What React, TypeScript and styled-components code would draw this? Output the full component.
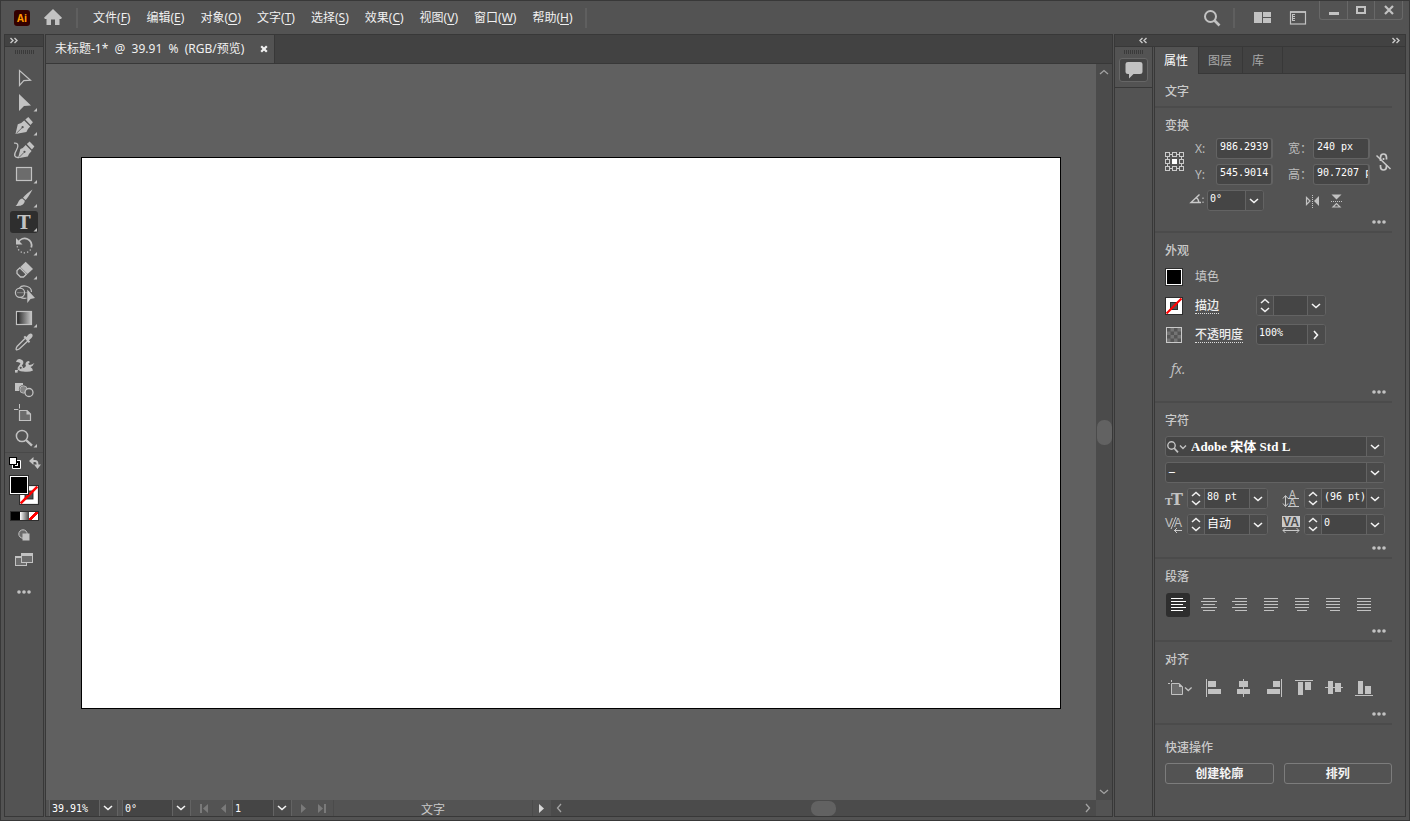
import React from 'react';
import styled, { createGlobalStyle, css } from 'styled-components';

const color = {
  base: '#535353',
  deep: '#424242',
  line: '#383838',
  canvas: '#606060',
  field: '#454545',
  fieldLine: '#636363',
  track: '#4b4b4b',
  icon: '#c2c2c2',
  text: '#cacaca',
  bright: '#f0f0f0',
};

const uiFont = '"Noto Sans", "Noto Sans CJK SC", sans-serif';
const monoFont = '"DejaVu Sans Mono", "Noto Sans CJK SC", monospace';

const GlobalStyle = createGlobalStyle`
  * { box-sizing: border-box; }
  body { margin: 0; background: ${color.base}; }
  body, button, input, select { font: 12px/18px ${uiFont}; color: ${color.text}; }
  button, input, select { margin: 0; padding: 0; border: 0; border-radius: 0; background: none; outline: none; }
  svg { display: block; flex: none; overflow: visible; }
`;

/* ---------- frame ---------- */

const Frame = styled.div`
  display: flex;
  flex-direction: column;
  min-height: 100vh;
  border: 1px solid ${color.line};
  background: ${color.base};
`;

const TitleBar = styled.header`
  display: flex;
  align-items: center;
  height: 33px;
  padding: 0 6px 0 13px;
`;

const Logo = styled.div`
  width: 16px;
  height: 16px;
  margin-right: 14px;
  border-radius: 3px;
  background: #330000;
  color: #ff9a00;
  font: bold 10px/16px "Open Sans", sans-serif;
  text-align: center;
`;

const IconButton = styled.button<{ $w?: number; $h?: number; $active?: boolean }>`
  display: flex;
  align-items: center;
  justify-content: center;
  flex: none;
  width: ${(p) => p.$w ?? 24}px;
  height: ${(p) => p.$h ?? 24}px;
  border-radius: 3px;
  color: ${(p) => (p.$active ? '#fff' : color.icon)};
  background: ${(p) => (p.$active ? '#2e2e2e' : 'none')};
`;

const BarDivider = styled.span`
  width: 2px;
  height: 20px;
  background: #5f5f5f;
`;

const MenuBar = styled.nav`
  display: flex;
  gap: 16px;
  padding: 0 12px 0 15px;
`;

const MenuItem = styled.button`
  color: ${color.bright};
  white-space: nowrap;
  u { text-underline-offset: 2px; }
`;

const TitleTools = styled.div`
  display: flex;
  align-items: center;
  gap: 12px;
  margin-left: auto;
  padding-right: 13px;
`;

const WindowControls = styled.div`
  display: flex;
  align-self: flex-start;
  height: 19px;
  border: 1px solid #686868;
  border-top: 0;
  border-radius: 0 0 3px 3px;
  button + button { border-left: 1px solid #686868; border-radius: 0; }
`;

const Workspace = styled.div`
  display: flex;
  flex: 1;
  gap: 1px;
  margin: 0 3px 3px;
`;

const Column = styled.section`
  display: flex;
  flex-direction: column;
  border: 1px solid ${color.line};
`;

const CollapseBar = styled.div`
  display: flex;
  align-items: center;
  flex: none;
  height: 12px;
  padding: 0 5px;
  border-bottom: 1px solid ${color.line};
  background: ${color.deep};
  color: ${color.text};
`;

const Grip = styled.div`
  width: 19px;
  height: 4px;
  margin: 3px auto 0;
  background: repeating-linear-gradient(90deg, #3a3a3a 0 1px, transparent 1px 2px);
`;

/* ---------- tools ---------- */

const ToolColumn = styled(Column)`
  flex: none;
  width: 40px;
`;

const ToolList = styled.div`
  display: flex;
  flex-direction: column;
  align-items: center;
  gap: 2px;
  margin-top: 13px;
  padding-bottom: 3px;
  border-bottom: 1px solid #494949;
`;

const SwatchTools = styled.div`
  display: flex;
  flex-direction: column;
  align-items: center;
`;

const SpreadRow = styled.div`
  display: flex;
  justify-content: space-between;
  width: 32px;
  margin: 4px 0 6px 2px;
`;

const ColorPair = styled.div`
  display: grid;
  width: 30px;
  height: 30px;
  margin-bottom: 6px;
`;

const PairButton = styled.button<{ $back?: boolean }>`
  grid-area: 1 / 1;
  place-self: ${(p) => (p.$back ? 'end' : 'start')};
  width: 20px;
  height: 20px;
`;

const ModeRow = styled.div`
  display: flex;
  height: 10px;
  margin-bottom: 3px;
  border: 1px solid #2d2d2d;
`;

const ModeButton = styled.button<{ $bg: string }>`
  width: 9px;
  height: 8px;
  background: ${(p) => p.$bg};
`;

/* ---------- document ---------- */

const DocumentColumn = styled(Column)`
  flex: 1;
  min-width: 0;
`;

const TabStrip = styled.div`
  display: flex;
  height: 29px;
  border-bottom: 1px solid ${color.line};
  background: ${color.deep};
`;

const DocumentTab = styled.div`
  display: flex;
  align-items: center;
  gap: 11px;
  padding: 0 1px 0 9px;
  border-right: 1px solid ${color.line};
  background: ${color.base};
  color: ${color.bright};
  white-space: pre;
`;

const CanvasRow = styled.div`
  display: flex;
  flex: 1;
`;

const Canvas = styled.main`
  display: flex;
  flex: 1;
  align-items: center;
  min-width: 0;
  padding: 2px 35px 0;
  background: ${color.canvas};
`;

const Artboard = styled.div`
  box-sizing: content-box;
  flex: 1;
  aspect-ratio: 16 / 9;
  border: 1px solid #000;
  background: #fff;
`;

const Scrollbar = styled.div<{ $vertical?: boolean }>`
  display: flex;
  align-items: center;
  justify-content: space-between;
  background: ${color.track};
  color: #a3a3a3;
  button { color: inherit; }
  ${(p) =>
    p.$vertical
      ? css`flex-direction: column; width: 16px;`
      : css`flex: 1; height: 16px;`}
`;

const Thumb = styled.div<{ $vertical?: boolean }>`
  width: ${(p) => (p.$vertical ? 15 : 25)}px;
  height: ${(p) => (p.$vertical ? 25 : 15)}px;
  border-radius: 7px;
  background: #626262;
`;

const StatusBar = styled.footer`
  display: flex;
  height: 16px;
`;

const StatusControls = styled.div`
  display: flex;
  align-items: center;
  width: 287px;
  padding-left: 3px;
`;

const StatusText = styled.div`
  display: flex;
  align-items: center;
  justify-content: center;
  width: 200px;
  height: 16px;
  padding-top: 4px;
  border: solid ${color.track};
  border-width: 0 1px;
`;

const Corner = styled.div`
  width: 16px;
`;

/* ---------- right dock ---------- */

const Dock = styled(Column)`
  flex: none;
`;

const DockBody = styled.div`
  display: flex;
  flex: 1;
  gap: 1px;
`;

const CommentColumn = styled.div`
  width: 38px;
  border-right: 1px solid ${color.line};
`;

const CommentGroup = styled.div`
  display: flex;
  flex-direction: column;
  align-items: center;
  gap: 4px;
  height: 41px;
  border-bottom: 1px solid ${color.line};
`;

const CommentButton = styled(IconButton)`
  border: 1px solid #666;
  background: ${color.field};
`;

const Properties = styled.div`
  width: 251px;
  border-left: 1px solid ${color.line};
`;

const PanelTabs = styled.div`
  display: flex;
  height: 27px;
  background: ${color.deep};
  box-shadow: inset 0 -1px ${color.line};
`;

const PanelTab = styled.button<{ $active?: boolean }>`
  padding: 0 10px 0 9px;
  border-right: 1px solid ${color.line};
  color: ${(p) => (p.$active ? '#fff' : '#a8a8a8')};
  background: ${(p) => (p.$active ? color.base : 'none')};
  &:last-child { padding-right: 18px; }
`;

const Section = styled.section<{ $last?: boolean }>`
  display: flex;
  flex-direction: column;
  margin-right: 13px;
  padding: ${(p) => (p.$last ? '14px 0 0 10px' : '9px 0 2px 10px')};
  border-bottom: ${(p) => (p.$last ? '0' : '2px solid #4b4b4b')};
`;

const Heading = styled.h2<{ $gap: number }>`
  margin: 0 0 ${(p) => p.$gap}px;
  font: 500 12px/18px ${uiFont};
`;

const More = styled(IconButton)<{ $top: number }>`
  align-self: flex-end;
  margin: ${(p) => p.$top}px 6px 0 0;
`;

const TransformGrid = styled.div`
  display: grid;
  grid-template-columns: 30px 21px 57px 40px 57px 22px;
  row-gap: 5px;
  align-items: center;
`;

const SpanTwo = styled.div<{ $end?: boolean }>`
  grid-row: 1 / 3;
  grid-column: ${(p) => (p.$end ? 6 : 1)};
  justify-self: ${(p) => (p.$end ? 'end' : 'start')};
`;

const FieldLabel = styled.label<{ $col: number; $indent?: number }>`
  grid-column: ${(p) => p.$col};
  padding-left: ${(p) => p.$indent ?? 0}px;
  color: #bcbcbc;
`;

const TextField = styled.input`
  width: 100%;
  min-width: 0;
  height: 21px;
  padding: 0 0 4px 3px;
  border: 1px solid ${color.fieldLine};
  border-right-width: 2px;
  border-radius: 3px;
  background: ${color.field};
  color: #fff;
  font: 10px/15px ${monoFont};
`;

const AngleRow = styled.div`
  display: flex;
  align-items: center;
  grid-column: 1 / -1;
  gap: 3px;
  padding-left: 25px;
`;

const FlipGroup = styled.div`
  display: flex;
  gap: 8px;
  margin-left: 37px;
`;

const ComboBox = styled.div<{ $w: number; $flat?: boolean }>`
  display: flex;
  flex: none;
  width: ${(p) => p.$w}px;
  height: ${(p) => (p.$flat ? 16 : 21)}px;
  border: 1px solid ${color.fieldLine};
  border-width: ${(p) => (p.$flat ? '0 1px' : '1px')};
  border-radius: ${(p) => (p.$flat ? 0 : 3)}px;
  background: ${color.field};
  overflow: hidden;
`;

const Stepper = styled.div`
  display: flex;
  flex-direction: column;
  width: 17px;
  border-right: 1px solid ${color.fieldLine};
  background: #4d4d4d;
  button { color: #f0f0f0; }
`;

const SelectArea = styled.div`
  display: grid;
  flex: 1;
  min-width: 0;
`;

const Select = styled.select<{ $face?: 'serif' | 'cjk'; $flat?: boolean }>`
  grid-area: 1 / 1;
  appearance: none;
  min-width: 0;
  width: 100%;
  padding: ${(p) => (p.$flat ? '2px 18px 0 2px' : p.$face === 'serif' ? '0 18px 0 2px' : '0 18px 3px 2px')};
  color: #fff;
  font: ${(p) =>
    p.$face === 'serif'
      ? 'bold 13px/18px "Liberation Serif", "Noto Sans CJK SC", serif'
      : p.$face === 'cjk'
        ? `12px/15px ${uiFont}`
        : `10px/14px ${monoFont}`};
`;

const DropMark = styled.span`
  display: flex;
  align-items: center;
  justify-content: center;
  grid-area: 1 / 1;
  justify-self: end;
  width: 18px;
  padding-right: 1px;
  border-left: 1px solid ${color.fieldLine};
  background: #4b4b4b;
  color: #f4f4f4;
  pointer-events: none;
`;

const FontSearch = styled.span`
  display: flex;
  align-items: center;
  gap: 1px;
  padding: 0 2px 0 1px;
  color: ${color.icon};
`;

const Rows = styled.div<{ $gap: number }>`
  display: flex;
  flex-direction: column;
  gap: ${(p) => p.$gap}px;
`;

const AppearanceRow = styled.div`
  display: grid;
  grid-template-columns: 30px 61px 1fr;
  align-items: center;
  height: 21px;
`;

const DottedLabel = styled.button`
  justify-self: start;
  height: 16px;
  border-bottom: 1px dotted #ddd;
  color: #ececec;
  font-weight: 500;
  line-height: 15px;
`;

const FxButton = styled(IconButton)`
  justify-content: flex-start;
  margin-top: 13px;
  padding-left: 6px;
  font: italic 14px/18px "Open Sans", sans-serif;
`;

const CharPair = styled.div`
  display: flex;
  align-items: center;
  gap: 4px;
`;

const CharLine = styled.div`
  display: flex;
  gap: 14px;
`;

const ButtonRow = styled.div<{ $gap: number; $indent?: number }>`
  display: flex;
  gap: ${(p) => p.$gap}px;
  padding-left: ${(p) => p.$indent ?? 0}px;
`;

const ActionButton = styled.button`
  flex: 1;
  height: 21px;
  border: 1px solid #7c7c7c;
  border-radius: 3px;
  color: #f4f4f4;
  font-weight: 600;
  line-height: 19px;
`;

/* ---------- icons ---------- */

const Svg = ({ w, h, children }: { w: number; h: number; children: React.ReactNode }) => (
  <svg width={w} height={h} viewBox={`0 0 ${w} ${h}`} fill="none" stroke="currentColor" aria-hidden="true">
    {children}
  </svg>
);

const chevrons = {
  down: 'M1 3L5 6.5L9 3',
  up: 'M1 7L5 3.5L9 7',
  right: 'M3 1L6.5 5L3 9',
  left: 'M7 1L3.5 5L7 9',
};

const Chevron = ({ dir = 'down', strong = true }: { dir?: keyof typeof chevrons; strong?: boolean }) => (
  <Svg w={10} h={10}>
    <path d={chevrons[dir]} strokeWidth={strong ? 1.6 : 1.3} />
  </Svg>
);

const DoubleArrow = ({ left }: { left?: boolean }) => (
  <Svg w={8} h={7}>
    <path d={left ? 'M3.5 1L1 3.5L3.5 6M7.5 1L5 3.5L7.5 6' : 'M0.5 1L3 3.5L0.5 6M4.5 1L7 3.5L4.5 6'} strokeWidth={1.4} />
  </Svg>
);

const Dots = () => (
  <svg width="14" height="4" viewBox="0 0 14 4" fill="currentColor" aria-hidden="true">
    <circle cx="2" cy="2" r="1.8" /><circle cx="7" cy="2" r="1.8" /><circle cx="12" cy="2" r="1.8" />
  </svg>
);

const Magnifier = () => (
  <Svg w={18} h={18}>
    <circle cx="7.5" cy="7.5" r="5.5" strokeWidth="2" />
    <path d="M11.5 11.5L16.5 16.5" strokeWidth="2.6" />
  </Svg>
);

const NoneSwatch = ({ size = 18 }: { size?: number }) => (
  <svg width={size} height={size} viewBox="0 0 18 18" aria-hidden="true">
    <rect width="18" height="18" fill="#2d2d2d" />
    <rect x="1" y="1" width="16" height="16" fill="#fff" />
    <rect x="5.5" y="5.5" width="7" height="7" fill="#535353" stroke="#2d2d2d" />
    <path d="M1.5 16.5L16.5 1.5" stroke="#f00" strokeWidth="2.2" />
  </svg>
);

const SolidSwatch = ({ size = 18 }: { size?: number }) => (
  <svg width={size} height={size} viewBox={`0 0 ${size} ${size}`} aria-hidden="true">
    <rect width={size} height={size} fill="#2d2d2d" />
    <rect x="1" y="1" width={size - 2} height={size - 2} fill="#fff" />
    <rect x="2" y="2" width={size - 4} height={size - 4} fill="#000" />
  </svg>
);

const solid = { fill: 'currentColor', stroke: 'none' };

const tools: { name: string; more?: boolean; active?: boolean; art: React.ReactNode }[] = [
  { name: '选择工具', art: <path d="M9.5 3.5V18.5L13.8 13.6L20.5 13.2Z" strokeWidth="1.2" /> },
  { name: '直接选择工具', more: true, art: <path {...solid} d="M9 3V20L14 15L21 14.5Z" /> },
  {
    name: '钢笔工具', more: true,
    art: <><path {...solid} d="M5.5 19L7.8 9.2Q11.5 8.4 14.2 5.4L20.2 11.4Q17.4 13.8 16.4 17Z" /><path {...solid} d="M15.3 4.4L18.3 2L22.9 7.2L20.5 10Z" /><path d="M6.5 18.2L12 12.8" stroke="#535353" strokeWidth=".8" /><circle cx="12.6" cy="12.2" r="1.1" fill="#535353" stroke="none" /></>,
  },
  {
    name: '曲率工具',
    art: <><path {...solid} d="M8 19.3L10.4 10Q13.5 9 15.7 6L21.6 12Q19 14.4 17.8 17.6Z" /><path {...solid} d="M16.8 5L19.6 2.6L24.4 7.6L21.9 10.6Z" /><path d="M9 18.5L14 13.4" stroke="#535353" strokeWidth=".8" /><circle cx="14.5" cy="12.8" r="1.1" fill="#535353" stroke="none" /><path d="M4 4.2C8.5 3.5 8.8 7 6.5 11C3.5 16 4 19 9 18.4" strokeWidth="1.3" /></>,
  },
  { name: '矩形工具', more: true, art: <rect x="6.5" y="4.5" width="15" height="13" fill="#6c6c6c" strokeWidth="1.2" /> },
  { name: '画笔工具', more: true, art: <><path {...solid} d="M22.5 2.5Q18 11 15.5 13L13 10.7Q16 7 22.5 2.5Z" /><path {...solid} d="M12.3 11.4L14.8 13.8C14.5 18 10 19.6 5.5 18.8C8.5 17.5 7.5 12.5 12.3 11.4Z" /></> },
  { name: '文字工具', more: true, active: true, art: <text x="14" y="18" textAnchor="middle" fontFamily="DejaVu Serif, serif" fontSize="18" fontWeight="bold" fill="currentColor" stroke="none">T</text> },
  { name: '旋转工具', more: true, art: <><path d="M8.5 7A7 7 0 0 1 21.3 12.5" strokeWidth="1.8" /><path {...solid} d="M6 3V9.5H12.5Z" /><path d="M20.6 14.5A7.2 7.2 0 0 1 7.3 11" strokeWidth="1.3" strokeDasharray="1.3 2" /></> },
  { name: '橡皮擦工具', more: true, art: <><path {...solid} d="M15.7 2.7L23 10L17.5 15L10.3 8Z" /><path d="M9.8 8.8L16.4 15.3L13.5 18H10.5L7 14.5V11.5Z" strokeWidth="1.3" /></> },
  { name: '形状生成器工具', art: <><circle cx="10" cy="9.7" r="4.6" strokeWidth="1.2" /><path d="M9.5 5C12 1.5 21.5 2.5 21.5 9M10.5 14.4Q14 16 16.5 15" strokeWidth="1.2" /><path d="M7.5 9.7H18" strokeDasharray="1 1" /><path {...solid} d="M17.3 6.5V20L20.5 16L25 15Z" /></> },
  { name: '渐变工具', more: true, art: <><defs><linearGradient id="toolGradient"><stop stopColor="#222" /><stop offset="1" stopColor="#c8c8c8" /></linearGradient></defs><rect x="6.5" y="4.5" width="15" height="13" fill="url(#toolGradient)" strokeWidth="1.2" /></> },
  { name: '吸管工具', art: <><path d="M15 7.5L7 15.5Q5.5 18.3 6.5 18.8Q7.8 19 9.5 17.8L17.8 10" strokeWidth="1.3" /><path {...solid} d="M13.5 6L15 4.7L16.4 6L18.5 3.5Q21 1.5 22.3 3.3Q23.5 5 21.5 7L19 9.2L20.2 10.7L18.8 12Z" /></> },
  { name: '操控变形工具', art: <><path {...solid} d="M6 7Q7 3.5 10.5 4.2Q15.5 6 12 10.5L10.5 13Q14 14 16 11Q14.5 8.5 17 6.5Q20 5 19.6 7.8Q17 8.6 19.5 10Q21.5 10 24.4 8Q22.5 11.8 20.5 12Q22.5 13 23 15.5Q19 17.5 13 16.4Q8 16.5 7.5 13L10.5 8.5Q9.5 6.5 6 7Z" /><path d="M5.5 17L10.5 12.5L15 10" stroke="#535353" strokeWidth=".8" /><circle cx="10.7" cy="12.8" r="1.7" fill="#535353" strokeWidth="1.2" /><rect x="5" y="15" width="2.6" height="2.6" {...solid} /><path d="M6.5 16L9.3 14" /></> },
  { name: '混合工具', art: <><rect {...solid} x="5" y="4" width="8" height="8" /><circle cx="13.5" cy="10.5" r="4.6" fill="#535353" stroke="none" /><circle cx="13.5" cy="10.5" r="3.7" fill="#858585" strokeWidth=".8" /><circle cx="19" cy="13.5" r="4" fill="#535353" strokeWidth="1.3" /></> },
  { name: '画板工具', art: <><path d="M4 6.5H8.3M9.5 1V5.5" /><path d="M9.5 7.5H17L20.5 11V17.5H9.5Z" fill="#6c6c6c" strokeWidth="1.2" /><path {...solid} d="M16.5 7V11.5H21Z" /></> },
  { name: '缩放工具', more: true, art: <><circle cx="12" cy="9" r="5.6" strokeWidth="1.5" /><path d="M16 13L22 18.7" strokeWidth="2.4" /></> },
];

const Bars = ({ rows }: { rows: [number, number][] }) => (
  <Svg w={24} h={24}>
    {rows.map(([x, w], i) => <rect key={i} x={x} y={5 + i * 3} width={w} height="1" {...solid} />)}
  </Svg>
);

const paragraphModes: { name: string; rows: [number, number][] }[] = [
  { name: '左对齐', rows: [[5, 12], [5, 15], [5, 12], [5, 15], [5, 12]] },
  { name: '居中对齐', rows: [[6, 12], [4, 16], [6, 12], [4, 16], [6, 12]] },
  { name: '右对齐', rows: [[7, 12], [4, 15], [7, 12], [4, 15], [7, 12]] },
  { name: '两端对齐，末行左对齐', rows: [[5, 14], [5, 14], [5, 14], [5, 14], [5, 10]] },
  { name: '两端对齐，末行居中对齐', rows: [[5, 14], [5, 14], [5, 14], [5, 14], [7, 10]] },
  { name: '两端对齐，末行右对齐', rows: [[5, 14], [5, 14], [5, 14], [5, 14], [9, 10]] },
  { name: '全部两端对齐', rows: [[5, 14], [5, 14], [5, 14], [5, 14], [5, 14]] },
];

const alignModes: { name: string; boxes: [number, number, number, number][] }[] = [
  { name: '水平左对齐', boxes: [[4, 3, 1, 18], [6, 5, 8, 6], [6, 13, 13, 5]] },
  { name: '水平居中对齐', boxes: [[11, 3, 1, 18], [7, 5, 9, 6], [5, 13, 13, 5]] },
  { name: '水平右对齐', boxes: [[19, 3, 1, 18], [11, 5, 7, 6], [5, 13, 13, 5]] },
  { name: '垂直顶对齐', boxes: [[3, 4, 18, 1], [6, 6, 5, 13], [13, 6, 6, 8]] },
  { name: '垂直居中对齐', boxes: [[3, 11, 18, 1], [6, 5, 5, 13], [13, 7, 6, 9]] },
  { name: '垂直底对齐', boxes: [[3, 19, 18, 1], [6, 5, 5, 13], [13, 10, 6, 8]] },
];

/* ---------- controls ---------- */

type ComboProps = {
  label: string;
  value: string;
  width: number;
  stepper?: boolean;
  flat?: boolean;
  face?: 'serif' | 'cjk';
  mark?: 'down' | 'right';
  lead?: React.ReactNode;
};

const Combo = ({ label, value, width, stepper, flat, face, mark = 'down', lead }: ComboProps) => (
  <ComboBox $w={width} $flat={flat}>
    {stepper && (
      <Stepper>
        <IconButton $w={15} $h={9} aria-label={`${label} 增加`}><Chevron dir="up" /></IconButton>
        <IconButton $w={15} $h={10} aria-label={`${label} 减少`}><Chevron /></IconButton>
      </Stepper>
    )}
    {lead}
    <SelectArea>
      <Select aria-label={label} $face={face} $flat={flat} defaultValue={value}>
        <option>{value}</option>
      </Select>
      <DropMark><Chevron dir={mark} /></DropMark>
    </SelectArea>
  </ComboBox>
);

const Play = ({ left, bar, bright }: { left?: boolean; bar?: boolean; bright?: boolean }) => (
  <svg width="9" height="9" viewBox="0 0 9 9" fill={bright ? '#d8d8d8' : '#7a7a7a'} aria-hidden="true">
    <path d={left ? 'M8 0V9L3 4.5Z' : 'M1 0V9L6 4.5Z'} />
    {bar && <rect x={left ? 0 : 7} width="2" height="9" />}
  </svg>
);

const menus = [
  ['文件', 'F'], ['编辑', 'E'], ['对象', 'O'], ['文字', 'T'], ['选择', 'S'],
  ['效果', 'C'], ['视图', 'V'], ['窗口', 'W'], ['帮助', 'H'],
];

const ToolPanel = () => (
  <ToolColumn aria-label="工具">
    <CollapseBar><DoubleArrow /></CollapseBar>
    <Grip />
    <ToolList>
      {tools.map((tool) => (
        <IconButton key={tool.name} $w={28} $h={22} $active={tool.active} aria-label={tool.name}>
          <svg width="28" height="22" viewBox="0 0 28 22" fill="none" stroke={color.icon} color={color.icon} aria-hidden="true">
            {tool.art}
            {tool.more && <path d="M27 17V20.5H23.5Z" {...solid} />}
          </svg>
        </IconButton>
      ))}
    </ToolList>
    <SwatchTools>
      <SpreadRow>
        <IconButton $w={12} $h={12} aria-label="默认填色和描边">
          <Svg w={12} h={12}>
            <path d="M3.5 3.5H11.5V11.5H3.5Z" fill="#000" stroke="#fff" strokeWidth="1" />
            <rect x="6" y="6" width="3" height="3" fill="#fff" stroke="none" />
            <rect x=".5" y=".5" width="7" height="7" stroke="#000" fill="#fff" />
          </Svg>
        </IconButton>
        <IconButton $w={12} $h={12} aria-label="互换填色和描边">
          <Svg w={12} h={12}>
            <path d="M3 4H6Q8.5 4 8.5 7V9" strokeWidth="1.8" />
            <path {...solid} d="M0 4L4.5 0V8ZM5 7.5H12L8.5 12Z" />
          </Svg>
        </IconButton>
      </SpreadRow>
      <ColorPair>
        <PairButton $back aria-label="描边"><NoneSwatch size={20} /></PairButton>
        <PairButton aria-label="填色"><SolidSwatch size={20} /></PairButton>
      </ColorPair>
      <ModeRow>
        <ModeButton $bg="#000" aria-label="颜色" />
        <ModeButton $bg="linear-gradient(90deg, #fff, #444)" aria-label="渐变" />
        <ModeButton $bg="linear-gradient(135deg, #fff 38%, #f00 38% 62%, #fff 62%)" aria-label="无" />
      </ModeRow>
      <IconButton $w={28} $h={22} aria-label="绘图模式">
        <Svg w={12} h={12}>
          <circle cx="5" cy="5" r="4.2" fill="#6c6c6c" />
          <rect x="4.5" y="4.5" width="7" height="7" {...solid} />
        </Svg>
      </IconButton>
      <IconButton $w={28} $h={28} aria-label="更改屏幕模式">
        <Svg w={18} h={14}>
          <rect x=".5" y="3.5" width="11" height="9" fill="#6c6c6c" />
          <rect x=".5" y="3" width="11" height="2" {...solid} />
          <rect x="6.5" y=".5" width="11" height="9" fill="#6c6c6c" />
          <rect x="6.5" y="0" width="11" height="3" {...solid} />
        </Svg>
      </IconButton>
      <IconButton $w={28} $h={36} aria-label="编辑工具栏"><Dots /></IconButton>
    </SwatchTools>
  </ToolColumn>
);

const DocumentArea = () => (
  <DocumentColumn>
    <TabStrip>
      <DocumentTab>
        {'未标题-1*  @  39.91  %  (RGB/预览)'}
        <IconButton $w={18} $h={18} aria-label="关闭">
          <Svg w={8} h={8}><path d="M1.2 1.2L6.8 6.8M6.8 1.2L1.2 6.8" strokeWidth="2.2" stroke="#f0f0f0" /></Svg>
        </IconButton>
      </DocumentTab>
    </TabStrip>
    <CanvasRow>
      <Canvas><Artboard /></Canvas>
      <Scrollbar $vertical>
        <IconButton $w={16} $h={16} aria-label="向上滚动"><Chevron dir="up" strong={false} /></IconButton>
        <Thumb $vertical />
        <IconButton $w={16} $h={16} aria-label="向下滚动"><Chevron strong={false} /></IconButton>
      </Scrollbar>
    </CanvasRow>
    <StatusBar>
      <StatusControls>
        <Combo label="缩放" value="39.91%" width={69} flat />
        <ButtonRow $gap={0} $indent={4}><Combo label="旋转视图" value="0°" width={69} flat /></ButtonRow>
        <ButtonRow $gap={0} $indent={4}>
          <IconButton $w={18} $h={16} aria-label="首项"><Play left bar /></IconButton>
          <IconButton $w={18} $h={16} aria-label="上一项"><Play left /></IconButton>
        </ButtonRow>
        <ButtonRow $gap={0} $indent={1}><Combo label="画板" value="1" width={60} flat /></ButtonRow>
        <ButtonRow $gap={0} $indent={4}>
          <IconButton $w={17} $h={16} aria-label="下一项"><Play /></IconButton>
          <IconButton $w={17} $h={16} aria-label="末项"><Play bar /></IconButton>
        </ButtonRow>
      </StatusControls>
      <StatusText>文字</StatusText>
      <IconButton $w={18} $h={16} aria-label="状态栏选项"><Play bright /></IconButton>
      <Scrollbar>
        <IconButton $w={16} $h={16} aria-label="向左滚动"><Chevron dir="left" strong={false} /></IconButton>
        <Thumb />
        <IconButton $w={16} $h={16} aria-label="向右滚动"><Chevron dir="right" strong={false} /></IconButton>
      </Scrollbar>
      <Corner />
    </StatusBar>
  </DocumentColumn>
);

const TransformSection = () => (
  <Section>
    <Heading $gap={3}>变换</Heading>
    <TransformGrid>
      <SpanTwo>
        <Svg w={19} h={19}>
          {[0, 7, 14].map((y) => [0, 7, 14].map((x) => (
            x === 7 && y === 7
              ? <rect key="mid" x="7" y="7" width="5" height="5" fill="#fff" stroke="none" />
              : <rect key={`${x}-${y}`} x={x + 0.5} y={y + 0.5} width="4" height="4" />
          )))}
          <path d="M5 2.5H7M12 2.5H14M5 16.5H7M12 16.5H14M2.5 5V7M2.5 12V14M16.5 5V7M16.5 12V14" />
        </Svg>
      </SpanTwo>
      <FieldLabel $col={2} htmlFor="pos-x">X:</FieldLabel>
      <TextField id="pos-x" defaultValue="986.2939" />
      <FieldLabel $col={4} $indent={15} htmlFor="size-w">宽：</FieldLabel>
      <TextField id="size-w" defaultValue="240 px" />
      <SpanTwo $end>
        <Svg w={16} h={18}>
          <path d="M4.5 8V4.5Q4.5 1 7.5 1Q10.5 1 10.5 4.5V6.5M4.5 12V13.5Q4.5 17 7.5 17Q10.5 17 10.5 13.5V12M7.5 5V7" strokeWidth="1.7" />
          <path d="M.5 2.5L14.5 16" strokeWidth="1.5" />
        </Svg>
      </SpanTwo>
      <FieldLabel $col={2} htmlFor="pos-y">Y:</FieldLabel>
      <TextField id="pos-y" defaultValue="545.9014" />
      <FieldLabel $col={4} $indent={15} htmlFor="size-h">高：</FieldLabel>
      <TextField id="size-h" defaultValue="90.7207 px" />
      <AngleRow>
        <Svg w={14} h={16}>
          <path d="M9.5 1.5L1 9.5H11M6 4.5Q8.7 6 8.8 9.5" strokeWidth="1.4" />
          <path d="M13 4.5V6M13 8.5V10" />
        </Svg>
        <Combo label="旋转" value="0°" width={57} />
        <FlipGroup>
          <IconButton $w={16} $h={16} aria-label="水平翻转">
            <Svg w={14} h={14}>
              <path d="M1.5 3.5L5 7L1.5 10.5Z" strokeWidth="1.2" /><path {...solid} d="M14 2V12L9 7Z" />
              <path d="M7.5 1V14" strokeDasharray="1 1" />
            </Svg>
          </IconButton>
          <IconButton $w={16} $h={16} aria-label="垂直翻转">
            <Svg w={14} h={14}>
              <path {...solid} d="M2.5 0.5H12.5L7.5 5.5Z" /><path d="M4 13L7.5 9.5L11 13Z" strokeWidth="1.2" />
              <path d="M2 7.5H14" strokeDasharray="1 1" />
            </Svg>
          </IconButton>
        </FlipGroup>
      </AngleRow>
    </TransformGrid>
    <More $top={4} $w={14} $h={14} aria-label="变换选项"><Dots /></More>
  </Section>
);

const AppearanceSection = () => (
  <Section>
    <Heading $gap={6}>外观</Heading>
    <Rows $gap={8}>
      <AppearanceRow><SolidSwatch /><span>填色</span></AppearanceRow>
      <AppearanceRow>
        <NoneSwatch />
        <DottedLabel>描边</DottedLabel>
        <Combo label="描边粗细" value="" width={70} stepper />
      </AppearanceRow>
      <AppearanceRow>
        <Svg w={18} h={18}>
          <rect x="1.5" y="1.5" width="15" height="15" fill="#555" />
          {[0, 1, 2, 3].map((r) => [0, 1, 2, 3].map((c) => (r + c) % 2 === 1 && (
            <rect key={`${r}${c}`} x={2 + c * 3.5} y={2 + r * 3.5} width="3.5" height="3.5" fill="#747474" stroke="none" />
          )))}
        </Svg>
        <DottedLabel>不透明度</DottedLabel>
        <Combo label="不透明度" value="100%" width={70} mark="right" />
      </AppearanceRow>
    </Rows>
    <FxButton $h={21} aria-label="效果">fx.</FxButton>
    <More $top={6} $w={14} $h={14} aria-label="外观选项"><Dots /></More>
  </Section>
);

const glyph = { fill: color.icon, stroke: 'none' };

const CharacterSection = () => (
  <Section>
    <Heading $gap={6}>字符</Heading>
    <Rows $gap={5}>
      <Combo
        label="字体系列" value="Adobe 宋体 Std L" width={220} face="serif"
        lead={
          <FontSearch>
            <Svg w={11} h={12}><circle cx="4.5" cy="4.5" r="3.7" strokeWidth="1.4" /><path d="M7 7L11 11.3" strokeWidth="1.8" /></Svg>
            <Svg w={8} h={8}><path d="M1 2.5L4 5.5L7 2.5" strokeWidth="1.4" /></Svg>
          </FontSearch>
        }
      />
      <Combo label="字体样式" value="−" width={220} face="serif" />
      <CharLine>
        <CharPair>
          <Svg w={18} h={18}>
            <text x="0" y="15" fontFamily="DejaVu Serif" fontSize="10" fontWeight="bold" {...glyph}>T</text>
            <text x="6" y="15" fontFamily="DejaVu Serif" fontSize="16" fontWeight="bold" {...glyph}>T</text>
          </Svg>
          <Combo label="字体大小" value="80 pt" width={81} stepper />
        </CharPair>
        <CharPair>
          <Svg w={18} h={18}>
            <text x="7" y="8" fontFamily="Liberation Sans" fontSize="10" {...glyph}>A</text>
            <text x="7" y="16" fontFamily="Liberation Sans" fontSize="10" {...glyph}>A</text>
            <path d="M6 8.5H17M6 16.5H17M3.5 6V16M1 8.5L3.5 5.5L6 8.5M1 13.5L3.5 16.5L6 13.5" />
          </Svg>
          <Combo label="行距" value="(96 pt)" width={81} stepper />
        </CharPair>
      </CharLine>
      <CharLine>
        <CharPair>
          <Svg w={18} h={18}>
            <text x="0" y="11" fontFamily="Liberation Sans" fontSize="12" {...glyph}>V</text>
            <text x="9" y="11" fontFamily="Liberation Sans" fontSize="12" {...glyph}>A</text>
            <path d="M6 13L11 1M9 14.5H17M12 12L9.5 14.5L12 17" />
          </Svg>
          <Combo label="字距微调" value="自动" width={81} stepper face="cjk" />
        </CharPair>
        <CharPair>
          <Svg w={18} h={18}>
            <rect width="18" height="11" {...solid} />
            <text x="9" y="10" textAnchor="middle" fontFamily="Liberation Sans" fontSize="12" fontWeight="bold" fill="#4a4a4a" stroke="none">VA</text>
            <path d="M1 14.5H17M3.5 12L1 14.5L3.5 17M14.5 12L17 14.5L14.5 17" />
          </Svg>
          <Combo label="字距" value="0" width={81} stepper />
        </CharPair>
      </CharLine>
    </Rows>
    <More $top={6} $w={14} $h={14} aria-label="字符选项"><Dots /></More>
  </Section>
);

const PropertiesPanel = () => (
  <Properties>
    <PanelTabs>
      <PanelTab $active>属性</PanelTab>
      <PanelTab>图层</PanelTab>
      <PanelTab>库</PanelTab>
    </PanelTabs>
    <Section><Heading $gap={3}>文字</Heading></Section>
    <TransformSection />
    <AppearanceSection />
    <CharacterSection />
    <Section>
      <Heading $gap={7}>段落</Heading>
      <ButtonRow $gap={7} $indent={1}>
        {paragraphModes.map((mode, i) => (
          <IconButton key={mode.name} $active={i === 0} aria-label={mode.name}><Bars rows={mode.rows} /></IconButton>
        ))}
      </ButtonRow>
      <More $top={7} $w={14} $h={14} aria-label="段落选项"><Dots /></More>
    </Section>
    <Section>
      <Heading $gap={7}>对齐</Heading>
      <ButtonRow $gap={6} $indent={1}>
        <IconButton $w={30} aria-label="对齐画板">
          <Svg w={30} h={24}>
            <path d="M2 7.5H4M5.5 4V6" />
            <path d="M5.5 7.5H13L16.5 11V18.5H5.5Z" fill="#6c6c6c" />
            <path {...solid} d="M13 7V11H17Z" />
            <path d="M19 11.5L22.3 14.5L25.6 11.5" strokeWidth="1.3" />
          </Svg>
        </IconButton>
        {alignModes.map((mode) => (
          <IconButton key={mode.name} aria-label={mode.name}>
            <Svg w={24} h={24}>
              {mode.boxes.map(([x, y, w, h], i) => <rect key={i} x={x} y={y} width={w} height={h} {...solid} />)}
            </Svg>
          </IconButton>
        ))}
      </ButtonRow>
      <More $top={7} $w={14} $h={14} aria-label="对齐选项"><Dots /></More>
    </Section>
    <Section $last>
      <Heading $gap={6}>快速操作</Heading>
      <ButtonRow $gap={10}>
        <ActionButton>创建轮廓</ActionButton>
        <ActionButton>排列</ActionButton>
      </ButtonRow>
    </Section>
  </Properties>
);

export default function App() {
  return (
    <Frame>
      <GlobalStyle />
      <TitleBar>
        <Logo>Ai</Logo>
        <IconButton $w={18} $h={18} aria-label="主页">
          <Svg w={18} h={18}>
            <path {...solid} d="M9 0L18 8.8L17 10H15.5V16H11V10.5H7V16H2.5V10H1L0 8.8Z" />
          </Svg>
        </IconButton>
        <ButtonRow $gap={0} $indent={14}><BarDivider /></ButtonRow>
        <MenuBar>
          {menus.map(([name, key]) => (
            <MenuItem key={key}>{name}(<u>{key}</u>)</MenuItem>
          ))}
        </MenuBar>
        <BarDivider />
        <TitleTools>
          <IconButton $w={18} $h={18} aria-label="搜索"><Magnifier /></IconButton>
          <BarDivider />
          <IconButton $w={31} $h={18} aria-label="排列文档">
            <Svg w={17} h={11}>
              <rect width="8" height="11" {...solid} /><rect x="9" width="8" height="5" {...solid} /><rect x="9" y="6" width="8" height="5" {...solid} />
            </Svg>
          </IconButton>
          <IconButton $w={16} $h={18} aria-label="切换工作区">
            <Svg w={16} h={14}>
              <rect x=".5" y="1" width="15" height="12" strokeWidth="1.2" />
              <path d="M0 1H16" strokeWidth="1.6" />
              <path d="M2.5 3.5H5M2.5 5.5H5M2.5 7.5H5M2.5 9.5H5M2.5 3V10" />
            </Svg>
          </IconButton>
        </TitleTools>
        <WindowControls>
          <IconButton $w={27} $h={18} aria-label="最小化"><Svg w={12} h={12}><path d="M1 9.5H11" strokeWidth="3" /></Svg></IconButton>
          <IconButton $w={27} $h={18} aria-label="最大化"><Svg w={12} h={10}><rect x="2" y="2" width="8" height="6" strokeWidth="2" /></Svg></IconButton>
          <IconButton $w={28} $h={18} aria-label="关闭窗口"><Svg w={12} h={10}><path d="M2 1L10 9M10 1L2 9" strokeWidth="2.2" /></Svg></IconButton>
        </WindowControls>
      </TitleBar>
      <Workspace>
        <ToolPanel />
        <DocumentArea />
        <Dock>
          <CollapseBar>
            <ButtonRow $gap={245} $indent={19}><DoubleArrow left /><DoubleArrow /></ButtonRow>
          </CollapseBar>
          <DockBody>
            <CommentColumn>
              <CommentGroup>
                <Grip />
                <CommentButton $w={29} $h={24} aria-label="注释">
                  <Svg w={18} h={18}>
                    <path {...solid} d="M3 1H15Q17.5 1 17.5 3V11Q17.5 13 15 13H8.5L4 17.5V13H3Q.5 13 .5 11V3Q.5 1 3 1Z" />
                  </Svg>
                </CommentButton>
              </CommentGroup>
            </CommentColumn>
            <PropertiesPanel />
          </DockBody>
        </Dock>
      </Workspace>
    </Frame>
  );
}
